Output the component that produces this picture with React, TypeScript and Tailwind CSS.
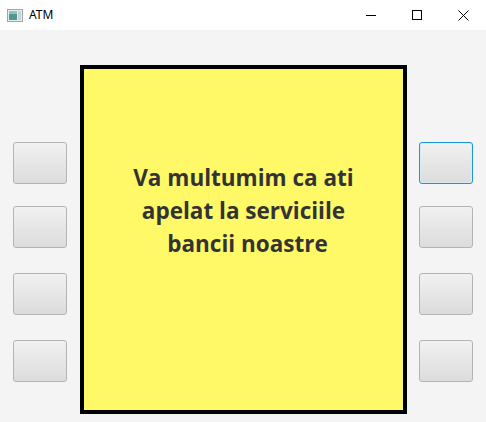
import React from "react";

function AtmButton({ focused = false, className = "" }: { focused?: boolean; className?: string }) {
  return (
    <div
      className={
        "h-[42px] w-[54px] rounded-[3px] bg-gradient-to-b from-[#f1f1f1] to-[#dcdcdc] " +
        (focused
          ? "border border-[#1c95d4] shadow-[inset_0_0_0_1px_#d6ecf8] "
          : "border border-[#b4b4b4] ") +
        className
      }
    />
  );
}

export default function App() {
  return (
    <div className="w-[486px] h-[422px] flex flex-col bg-[#f4f4f4] overflow-hidden" style={{ fontFamily: '"Noto Sans", "Liberation Sans", sans-serif' }}>
      {/* Title bar */}
      <div className="h-[30px] bg-white flex items-center relative">
        <svg className="ml-[7px]" width="16" height="13" viewBox="0 0 16 13">
          <rect x="0.5" y="0.5" width="15" height="12" fill="#e8eef0" stroke="#9aa6ab" />
          <rect x="2" y="2" width="8" height="9" fill="#4f9a8c" />
          <rect x="2" y="2" width="8" height="3" fill="#8fc4b8" />
          <rect x="11" y="2" width="3" height="9" fill="#c9d3d6" />
        </svg>
        <span className="ml-[6px] text-[12px] text-black leading-none">ATM</span>
        <div className="ml-auto flex items-center h-full">
          <div className="w-[46px] h-full flex items-center justify-center">
            <svg width="10" height="10" viewBox="0 0 10 10"><line x1="0" y1="5.5" x2="10" y2="5.5" stroke="#000" strokeWidth="1" /></svg>
          </div>
          <div className="w-[46px] h-full flex items-center justify-center">
            <svg width="10" height="10" viewBox="0 0 10 10"><rect x="0.5" y="0.5" width="9" height="9" fill="none" stroke="#000" strokeWidth="1" /></svg>
          </div>
          <div className="w-[46px] h-full flex items-center justify-center">
            <svg width="11" height="11" viewBox="0 0 11 11"><path d="M0.5 0.5 L10.5 10.5 M10.5 0.5 L0.5 10.5" stroke="#000" strokeWidth="1" /></svg>
          </div>
        </div>
      </div>
      {/* Body */}
      <div className="flex-1 flex px-[13px]">
        <div className="w-[54px] flex flex-col pt-[112px]">
          <AtmButton />
          <AtmButton className="mt-[22px]" />
          <AtmButton className="mt-[25px]" />
          <AtmButton className="mt-[25px]" />
        </div>
        <div className="ml-[13px] mt-[35px] w-[327px] h-[349px] border-4 border-black bg-[#fff968] pt-[92px]">
          <div
            className="text-center text-[22.5px] leading-[33px] font-bold text-[#333333]"
            style={{ fontFamily: '"Open Sans", "Noto Sans", sans-serif' }}
          >
            <div>Va multumim ca ati</div>
            <div>apelat la serviciile</div>
            <div className="pl-[8px]">bancii noastre</div>
          </div>
        </div>
        <div className="ml-[12px] w-[54px] flex flex-col pt-[112px]">
          <AtmButton focused />
          <AtmButton className="mt-[22px]" />
          <AtmButton className="mt-[25px]" />
          <AtmButton className="mt-[25px]" />
        </div>
      </div>
    </div>
  );
}
